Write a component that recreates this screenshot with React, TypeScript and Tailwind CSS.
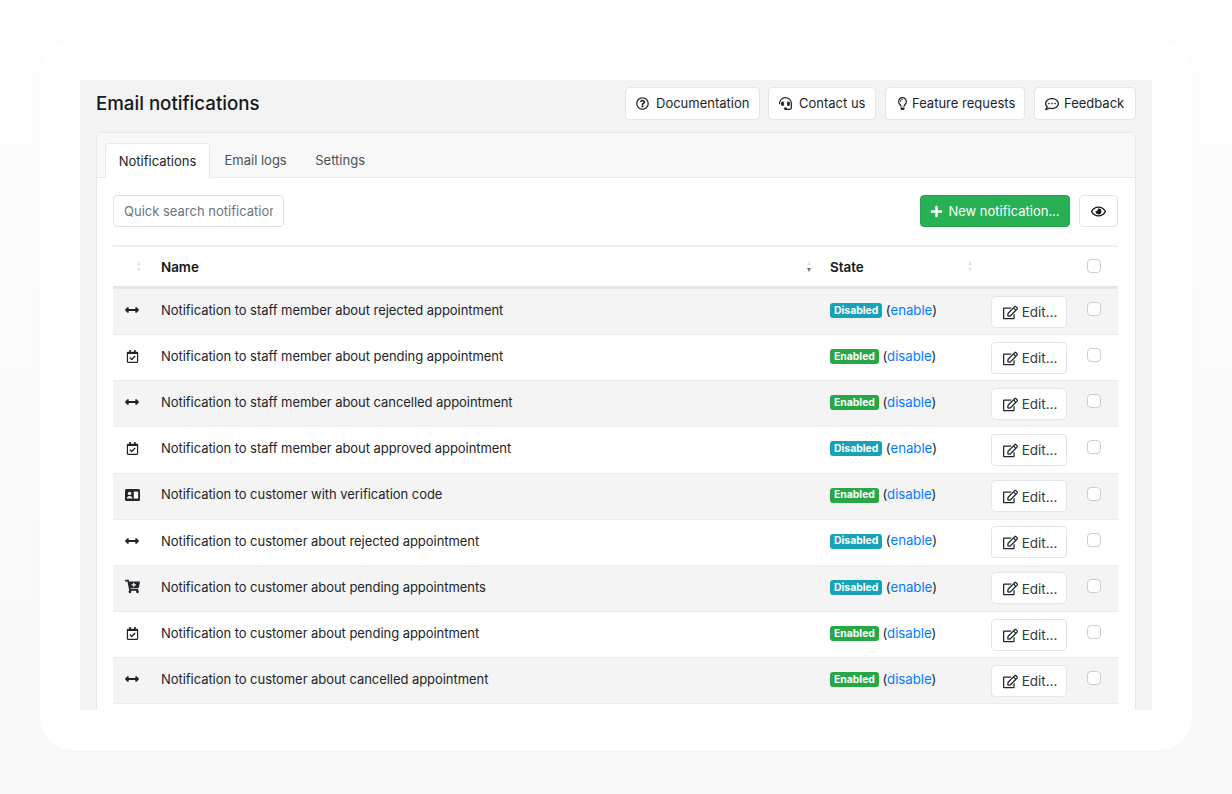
import React from "react";
import {
  FaArrowsAltH, FaRegCalendarCheck, FaCartPlus, FaRegEdit, FaRegQuestionCircle,
  FaHeadset, FaRegLightbulb, FaRegCommentDots, FaPlus, FaRegEye,
} from "react-icons/fa";

const rows: [string, string, boolean][] = [
  ["arrows", "Notification to staff member about rejected appointment", false],
  ["cal", "Notification to staff member about pending appointment", true],
  ["arrows", "Notification to staff member about cancelled appointment", true],
  ["cal", "Notification to staff member about approved appointment", false],
  ["id", "Notification to customer with verification code", true],
  ["arrows", "Notification to customer about rejected appointment", false],
  ["cart", "Notification to customer about pending appointments", false],
  ["cal", "Notification to customer about pending appointment", true],
  ["arrows", "Notification to customer about cancelled appointment", true],
];

function IdCardIcon() {
  return (
    <svg width="15" height="12" viewBox="0 0 15 12" className="block">
      <rect width="15" height="12" rx="1.5" fill="#212529" />
      <circle cx="4.6" cy="4.4" r="1.7" fill="#fff" />
      <path d="M1.8 9.6c0-1.6 1.2-2.7 2.8-2.7s2.8 1.1 2.8 2.7z" fill="#fff" />
      <rect x="8.8" y="2.6" width="4.4" height="7" fill="#fff" />
    </svg>
  );
}

function RowIcon({ kind }: { kind: string }) {
  if (kind === "arrows") return <FaArrowsAltH className="text-[14px]" />;
  if (kind === "cal") return <FaRegCalendarCheck className="text-[13px]" />;
  if (kind === "id") return <IdCardIcon />;
  return <FaCartPlus className="text-[15px]" />;
}

function Sort({ active }: { active?: boolean }) {
  return (
    <span className="flex flex-col gap-[3px] items-center">
      <span className="w-0 h-0 border-x-[2.5px] border-x-transparent border-b-[4px] border-b-[#e3e5e8]" />
      <span className={"w-0 h-0 border-x-[2.5px] border-x-transparent border-t-[4px] " + (active ? "border-t-[#6c757d]" : "border-t-[#e3e5e8]")} />
    </span>
  );
}

function Check() {
  return <span className="block w-[14px] h-[14px] rounded-[4px] border border-[#c9ced4] bg-white" />;
}

function TopButton({ icon, label, cls }: { icon: React.ReactNode; label: string; cls: string }) {
  return (
    <button className={"h-[33px] flex items-center px-[10px] bg-white border border-[#e2e5ea] rounded-[4px] text-[13px] text-[#212529] whitespace-nowrap " + cls}>
      <span className="shrink-0 flex">{icon}</span>
      {label}
    </button>
  );
}

export default function App() {
  return (
    <div className="w-[1232px] h-[794px] overflow-hidden p-10 bg-gradient-to-b from-[#fefefe] to-[#f8f8f8] font-['Inter',sans-serif] text-[#212529]">
      <div className="h-[710px] bg-white rounded-[32px] p-10 shadow-[0_0_24px_rgba(0,0,0,0.012)]">
        <div className="h-[630px] bg-[#f3f3f3] px-4 overflow-hidden">
          <div className="h-[52px] flex items-start pt-[7px]">
            <h1 className="text-[18.7px] leading-[32px] mt-[1px] font-medium text-[#15181b]">Email notifications</h1>
            <div className="ml-auto flex">
              <TopButton cls="w-[135px] gap-[7px]" icon={<FaRegQuestionCircle className="text-[13px]" />} label="Documentation" />
              <TopButton cls="w-[108px] gap-[7px] ml-[8px]" icon={<FaHeadset className="text-[13px]" />} label="Contact us" />
              <TopButton cls="w-[140px] gap-[3px] ml-[9px]" icon={<FaRegLightbulb className="text-[13px]" />} label="Feature requests" />
              <TopButton cls="w-[102px] gap-[5px] ml-[9px]" icon={<FaRegCommentDots className="text-[14px]" />} label="Feedback" />
            </div>
          </div>

          <div className="bg-white border border-[#e6e8eb] rounded-t-[4px] h-[600px]">
            <div className="h-[45px] bg-[#f8f8f8] border-b border-[#e6e8eb] rounded-t-[4px] flex items-end pl-[8px] text-[13px]">
              <div className="relative -mb-px w-[105px] h-[35px] pt-[2px] bg-white border border-b-0 border-[#e6e8eb] rounded-t-[4px] flex items-center justify-center text-[#212529]">Notifications</div>
              <div className="h-[35px] pl-[14.5px] pr-[14px] flex items-center pt-[3px] text-[#495057]">Email logs</div>
              <div className="h-[35px] pl-[14.5px] pr-[14px] flex items-center pt-[3px] text-[#495057]">Settings</div>
            </div>

            <div className="pl-4 pr-[17px] pt-4">
              <div className="flex items-center h-[34px]">
                <div className="w-[171px] h-[32px] px-[10px] pt-[1px] flex items-center border border-[#dfe2e6] rounded-[4px] text-[13px] text-[#6c757d] whitespace-nowrap bg-white">
                  <span className="w-[149px] overflow-hidden">Quick search notifications</span>
                </div>
                <button className="ml-auto w-[150px] h-[32px] pt-[1px] flex items-center justify-center gap-[5px] bg-[#28b054] border border-[#24a34d] rounded-[4px] text-white text-[13px]">
                  <FaPlus className="text-[13px]" />
                  New notification...
                </button>
                <button className="ml-[9px] w-[39px] h-[32px] flex items-center justify-center bg-white border border-[#e2e5ea] rounded-[4px]">
                  <FaRegEye className="text-[15px] text-[#15181b]" />
                </button>
              </div>

              <div className="mt-[17px] border-t-2 border-[#eff0f2]">
                <div className="h-[42px] flex items-center border-b-[3px] border-[#e3e5e9] text-[13.4px] font-semibold text-[#15181b]">
                  <div className="w-[36px] h-full flex items-center justify-center pl-[16px]"><Sort /></div>
                  <div className="w-[669px] pl-[12px] flex items-center pr-[7px]">
                    <span className="mt-[2px]">Name</span>
                    <span className="ml-auto"><Sort active /></span>
                  </div>
                  <div className="w-[154px] pl-[12px] flex items-center">
                    <span className="mt-[2px]">State</span>
                    <span className="ml-auto"><Sort /></span>
                  </div>
                  <div className="w-[115px]" />
                  <div className="flex-1 flex items-center -mt-[2px]"><Check /></div>
                </div>

                {rows.map(([icon, name, enabled], i) => (
                  <div key={i} className={"h-[46.15px] flex items-center border-b border-[#e9ebee] " + (i % 2 === 0 ? "bg-[#f4f4f4]" : "bg-white")}>
                    <div className="w-[36px] flex justify-center pl-[2px] -mt-[3px] text-[#212529]"><RowIcon kind={icon} /></div>
                    <div className="w-[669px] pl-[12px] -mt-[2px] text-[13px] tracking-[-0.05px] whitespace-nowrap">{name}</div>
                    <div className="w-[173px] pl-[12px] -mt-[2px] flex items-center whitespace-nowrap text-[13.2px]">
                      <span className={"h-[15px] flex items-center px-[4px] rounded-[3px] text-[10.4px] font-bold text-white " + (enabled ? "bg-[#28a745]" : "bg-[#17a2b8]")}>
                        {enabled ? "Enabled" : "Disabled"}
                      </span>
                      <span className="ml-[3.5px]">(<span className="text-[#007bff]">{enabled ? "disable" : "enable"}</span>)</span>
                    </div>
                    <button className="w-[76px] h-[32px] pl-[2px] pt-[1px] flex items-center justify-center gap-[4px] bg-white border border-[#e2e5ea] rounded-[4px] text-[13.5px] text-[#343a40] shrink-0">
                      <FaRegEdit className="text-[15px] text-[#212529]" />
                      Edit...
                    </button>
                    <div className="ml-[20px] -mt-[5px]"><Check /></div>
                  </div>
                ))}
              </div>
            </div>
          </div>
        </div>
      </div>
    </div>
  );
}
